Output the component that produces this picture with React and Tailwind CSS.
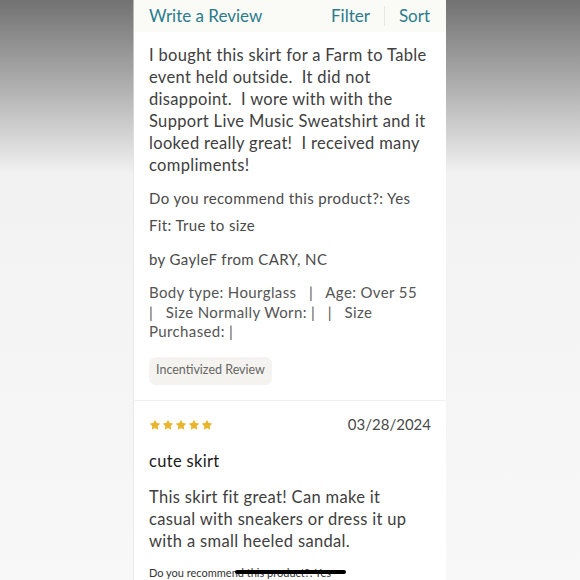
import { Star } from 'lucide-react';

const reviewLines = [
  'I bought this skirt for a Farm to Table',
  'event held outside.  It did not',
  'disappoint.  I wore with with the',
  'Support Live Music Sweatshirt and it',
  'looked really great!  I received many',
  'compliments!',
];

const secondLines = [
  'This skirt fit great! Can make it',
  'casual with sneakers or dress it up',
  'with a small heeled sandal.',
];

export default function App() {
  return (
    <div
      className="relative w-[580px] h-[580px] overflow-hidden flex bg-linear-to-b from-[#727272] via-[#f2f2f2] via-30% to-[#f8f8f8] text-[#404040]"
      style={{ fontFamily: 'Lato, "Noto Sans", sans-serif' }}
    >
      <div className="w-[134px] shrink-0 border-r border-[#e2e2e2]/60" />

      <div className="w-[312px] shrink-0 bg-white flex flex-col">
        {/* top bar */}
        <div className="h-[32px] bg-[#fafaf6] flex items-center justify-between pl-[15px] pr-[16px] text-[#2a7b8c] text-[17px]">
          <span>Write a Review</span>
          <div className="flex items-center">
            <span>Filter</span>
            <span className="mx-[14px] w-px h-[20px] bg-[#e6e6e2]" />
            <span>Sort</span>
          </div>
        </div>

        <div className="px-[15px]">
          <p className="mt-[12px] text-[16.5px] leading-[22px] tracking-[0.02em] whitespace-pre">
            {reviewLines.map((l) => (
              <span key={l} className="block">{l}</span>
            ))}
          </p>

          <div className="text-[15px] tracking-[0.025em] text-[#4a4a4a]">
            <p className="mt-[12px] leading-[20px]">Do you recommend this product?: Yes</p>
            <p className="mt-[7px] leading-[20px]">Fit: True to size</p>
            <p className="mt-[14px] leading-[20px]">by GayleF from CARY, NC</p>

            <p className="mt-[14px] leading-[19.5px] text-[#555] whitespace-pre">
              <span className="block">Body type: Hourglass   |   Age: Over 55</span>
              <span className="block">|   Size Normally Worn: |   |   Size</span>
              <span className="block">Purchased: |</span>
            </p>
          </div>

          <div className="mt-[15px] inline-flex items-center h-[28px] px-[7px] rounded-[7px] bg-[#f4f3ef] text-[12.5px] text-[#666]">
            Incentivized Review
          </div>
        </div>

        <div className="mt-[15px] h-px bg-[#efefef]" />

        <div className="px-[15px]">
          <div className="mt-[14px] h-[20px] flex items-center justify-between">
            <div className="flex items-center gap-[1px]">
              {[0, 1, 2, 3, 4].map((i) => (
                <Star key={i} className="w-[12px] h-[12px] text-[#e8b52c]" fill="currentColor" strokeWidth={0} />
              ))}
            </div>
            <span className="text-[15px] text-[#4a4a4a]">03/28/2024</span>
          </div>

          <p className="mt-[15px] text-[16.5px] leading-[22px] tracking-[0.02em] text-[#1a1a1a]">cute skirt</p>

          <p className="mt-[14px] text-[16.5px] leading-[22px] tracking-[0.02em] whitespace-pre">
            {secondLines.map((l) => (
              <span key={l} className="block">{l}</span>
            ))}
          </p>

          <p className="mt-[14px] text-[11px] leading-[14px] text-[#333]">Do you recommend this product?: Yes</p>
        </div>
      </div>

      <div className="w-[134px] shrink-0" />

      {/* home indicator */}
      <div className="absolute left-[235px] top-[570px] w-[111px] h-[4px] rounded-full bg-black" />
    </div>
  );
}
